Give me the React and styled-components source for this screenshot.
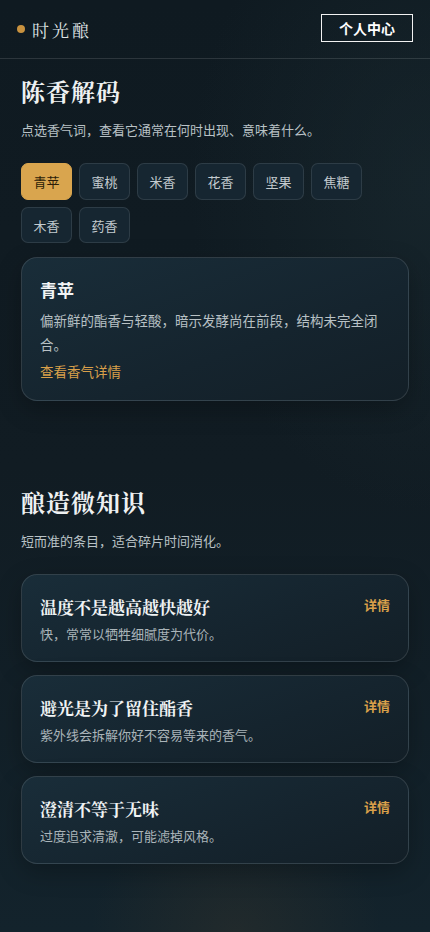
import React, { useState } from 'react';
import styled, { createGlobalStyle } from 'styled-components';

const GlobalStyle = createGlobalStyle`
  html, body {
    margin: 0;
    padding: 0;
    background: #101b22;
  }
  body {
    font-family: "Noto Sans CJK SC", "Noto Sans", sans-serif;
    color: #e8ecee;
  }
  * { box-sizing: border-box; }
`;

const SERIF = `"Noto Serif CJK SC", "Liberation Serif", serif`;

const Page = styled.div`
  min-height: 932px;
  background:
    radial-gradient(ellipse 45% 18% at 55% 100%, rgba(70, 60, 44, 0.28), transparent 75%),
    radial-gradient(ellipse 80% 50% at 100% 20%, rgba(30, 48, 54, 0.45), transparent 70%),
    linear-gradient(180deg, #0f1a21 0%, #111c23 50%, #13232c 100%);
  padding-bottom: 40px;
`;

const Header = styled.header`
  height: 59px;
  display: flex;
  align-items: center;
  justify-content: space-between;
  padding: 0 17px;
  border-bottom: 1px solid rgba(255, 255, 255, 0.12);
`;

const Brand = styled.div`
  display: flex;
  align-items: center;
  gap: 7px;
  font-family: ${SERIF};
  font-size: 17px;
  letter-spacing: 3px;
  color: #dfe4e6;
`;

const Dot = styled.span`
  width: 8px;
  height: 8px;
  border-radius: 50%;
  background: #c8923f;
`;

const ProfileButton = styled.button`
  height: 28px;
  padding: 0 17px;
  margin-top: -2px;
  background: transparent;
  border: 1px solid #f2f2f2;
  color: #ffffff;
  font-family: "Noto Sans CJK SC", sans-serif;
  font-size: 14px;
  font-weight: 700;
  cursor: pointer;
`;

const Section = styled.section`
  padding: 0 21px;
  margin-top: ${(p) => p.$top}px;
`;

const Title = styled.h2`
  margin: 0;
  font-family: ${SERIF};
  font-size: 24px;
  font-weight: 700;
  line-height: 34px;
  color: #eef1f2;
  letter-spacing: 1px;
`;

const Subtitle = styled.p`
  margin: 12px 0 0;
  font-size: 13px;
  line-height: 20px;
  color: #b9c2c6;
`;

const ChipGrid = styled.div`
  display: flex;
  flex-wrap: wrap;
  gap: 7px 7px;
  margin-top: 23px;
`;

const Chip = styled.button`
  height: ${(p) => (p.$row2 ? 36 : 37)}px;
  min-width: 51px;
  padding: 0 11.5px;
  border-radius: 7px;
  border: 1px solid ${(p) => (p.$active ? '#d9a54e' : 'rgba(255, 255, 255, 0.1)')};
  background: ${(p) => (p.$active ? '#d9a54e' : '#162631')};
  color: ${(p) => (p.$active ? '#2b1d08' : '#c3cbcf')};
  font-family: "Noto Sans CJK SC", sans-serif;
  font-size: 13px;
  cursor: pointer;
`;

const Card = styled.div`
  border-radius: 16px;
  border: 1px solid rgba(255, 255, 255, 0.12);
  background: linear-gradient(160deg, #192d39 0%, #15242e 60%, #131f27 100%);
  box-shadow: 0 8px 24px rgba(0, 0, 0, 0.25);
`;

const AromaCard = styled(Card)`
  margin-top: 14px;
  padding: 20px 18px 19px;
`;

const AromaName = styled.h3`
  margin: 0;
  font-size: 17px;
  font-weight: 700;
  line-height: 24px;
  color: #f2f4f5;
`;

const AromaText = styled.p`
  margin: 6px 0 0;
  font-size: 13.5px;
  line-height: 24px;
  color: #b8c1c5;
`;

const AromaLink = styled.a`
  display: block;
  margin-top: 5px;
  font-size: 13.5px;
  line-height: 20px;
  color: #d9a04a;
  text-decoration: none;
  cursor: pointer;
`;

const TipList = styled.div`
  display: flex;
  flex-direction: column;
  gap: 13px;
  margin-top: 23px;
`;

const TipCard = styled(Card)`
  height: 88px;
  padding: 20px 18px 0;
  display: flex;
  justify-content: space-between;
  align-items: flex-start;
`;

const TipBody = styled.div`
  display: flex;
  flex-direction: column;
`;

const TipTitle = styled.h4`
  margin: 0;
  font-family: ${SERIF};
  font-size: 17px;
  font-weight: 700;
  line-height: 24px;
  color: #f0f3f4;
`;

const TipText = styled.p`
  margin: 6px 0 0;
  font-size: 13px;
  line-height: 18px;
  color: #aab4b9;
`;

const DetailLink = styled.a`
  margin-top: 1px;
  font-size: 13px;
  font-weight: 700;
  color: #d9a04a;
  line-height: 18px;
  cursor: pointer;
`;

const aromas = [
  { name: '青苹', text: '偏新鲜的酯香与轻酸，暗示发酵尚在前段，结构未完全闭合。' },
  { name: '蜜桃', text: '成熟果香，带一点柔和的甜感，常见于酯类积累的中段。' },
  { name: '米香', text: '谷物与米饭般的温润气息，来自原料本身。' },
  { name: '花香', text: '轻盈的花朵香气，往往与低温慢发酵有关。' },
  { name: '坚果', text: '烘烤坚果般的香气，多出现于陈放之后。' },
  { name: '焦糖', text: '焦糖与蜂蜜的甜香，暗示熟成与氧化。' },
  { name: '木香', text: '木质与淡淡的烟熏感，常与陈放容器有关。' },
  { name: '药香', text: '草本与药材般的气息，复杂而持久。' },
];

const tips = [
  { title: '温度不是越高越快越好', text: '快，常常以牺牲细腻度为代价。' },
  { title: '避光是为了留住酯香', text: '紫外线会拆解你好不容易等来的香气。' },
  { title: '澄清不等于无味', text: '过度追求清澈，可能滤掉风格。' },
];

const App = () => {
  const [active, setActive] = useState(0);
  const current = aromas[active];

  return (
    <>
      <GlobalStyle />
      <Page>
        <Header>
          <Brand>
            <Dot />
            时光酿
          </Brand>
          <ProfileButton>个人中心</ProfileButton>
        </Header>

        <Section $top={15}>
          <Title>陈香解码</Title>
          <Subtitle>点选香气词，查看它通常在何时出现、意味着什么。</Subtitle>
          <ChipGrid>
            {aromas.map((a, i) => (
              <Chip
                key={a.name}
                $active={i === active}
                $row2={i >= 6}
                onClick={() => setActive(i)}
              >
                {a.name}
              </Chip>
            ))}
          </ChipGrid>
          <AromaCard>
            <AromaName>{current.name}</AromaName>
            <AromaText>{current.text}</AromaText>
            <AromaLink>查看香气详情</AromaLink>
          </AromaCard>
        </Section>

        <Section $top={84}>
          <Title>酿造微知识</Title>
          <Subtitle>短而准的条目，适合碎片时间消化。</Subtitle>
          <TipList>
            {tips.map((t) => (
              <TipCard key={t.title}>
                <TipBody>
                  <TipTitle>{t.title}</TipTitle>
                  <TipText>{t.text}</TipText>
                </TipBody>
                <DetailLink>详情</DetailLink>
              </TipCard>
            ))}
          </TipList>
        </Section>
      </Page>
    </>
  );
};

export default App;
